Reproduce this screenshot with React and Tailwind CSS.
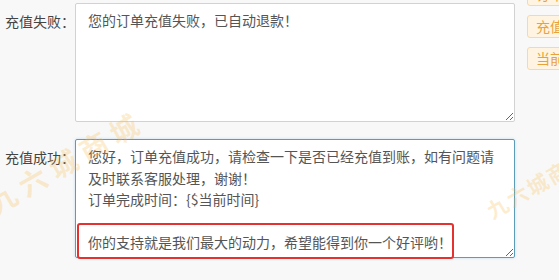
import React from 'react';

const font = { fontFamily: '"Noto Sans CJK SC", "Noto Sans", sans-serif' };

const failText = '您的订单充值失败，已自动退款！';
const okText =
  '您好，订单充值成功，请检查一下是否已经充值到账，如有问题请及时联系客服处理，谢谢！\n订单完成时间：{$当前时间}\n\n你的支持就是我们最大的动力，希望能得到你一个好评哟！';

const tags = ['订单编号', '充值账号', '当前时间'];

function Row({ label, value, focused, children }) {
  return (
    <div className="flex items-start">
      <div className="w-[75px] shrink-0 pl-[5px] pt-[8px] text-[14px] leading-[21.5px] text-[#444]">{label}</div>
      <div className="relative w-[440px] shrink-0">
        <textarea
          readOnly
          defaultValue={value}
          className={`block h-[119px] w-full rounded-[2px] border bg-white px-[12px] pt-[6px] text-[14px] leading-[21.5px] text-[#555] outline-none ${
            focused ? 'border-[#5d9cb6] shadow-[0_0_3px_rgba(102,175,233,0.35)]' : 'border-[#d2d2d2]'
          }`}
          style={font}
        />
        {children}
      </div>
    </div>
  );
}

export default function App() {
  return (
    <div className="relative h-[280px] w-[559px] overflow-hidden bg-[#f8f8f8]" style={font}>
      <div className="flex items-start">
        <div className="flex flex-col gap-[17px] pt-[3px]">
          <Row label="充值失败：" value={failText} />
          <Row label="充值成功：" value={okText} focused>
            {/* 빨간 강조 박스 */}
            <div className="pointer-events-none absolute left-[2px] top-[84px] h-[36px] w-[377px] rounded-[3px] border-2 border-[#e3322f]" />
          </Row>
        </div>
        <div className="ml-[12px] flex -mt-[17px] flex-col gap-[9px]">
          {tags.map((t) => (
            <div
              key={t}
              className="h-[23px] w-[80px] whitespace-nowrap rounded-[3px] border border-[#f6d9a6] bg-[#fff4e2] px-[8px] text-[14px] leading-[21px] text-[#e9a23b]"
            >
              {t}
            </div>
          ))}
        </div>
      </div>

      {/* 워터마크 */}
      <div className="pointer-events-none absolute left-[-22px] top-[145px] w-[180px] -rotate-[30deg] whitespace-nowrap text-[28px] font-semibold leading-[30px] tracking-[7px] text-[rgba(250,185,70,0.26)]">
        九六城商城
      </div>
      <div className="pointer-events-none absolute left-[480px] top-[171px] w-[120px] -rotate-[30deg] whitespace-nowrap text-[21px] font-semibold leading-[22px] tracking-[2px] text-[rgba(250,185,70,0.26)]">
        九六城商城
      </div>
    </div>
  );
}
